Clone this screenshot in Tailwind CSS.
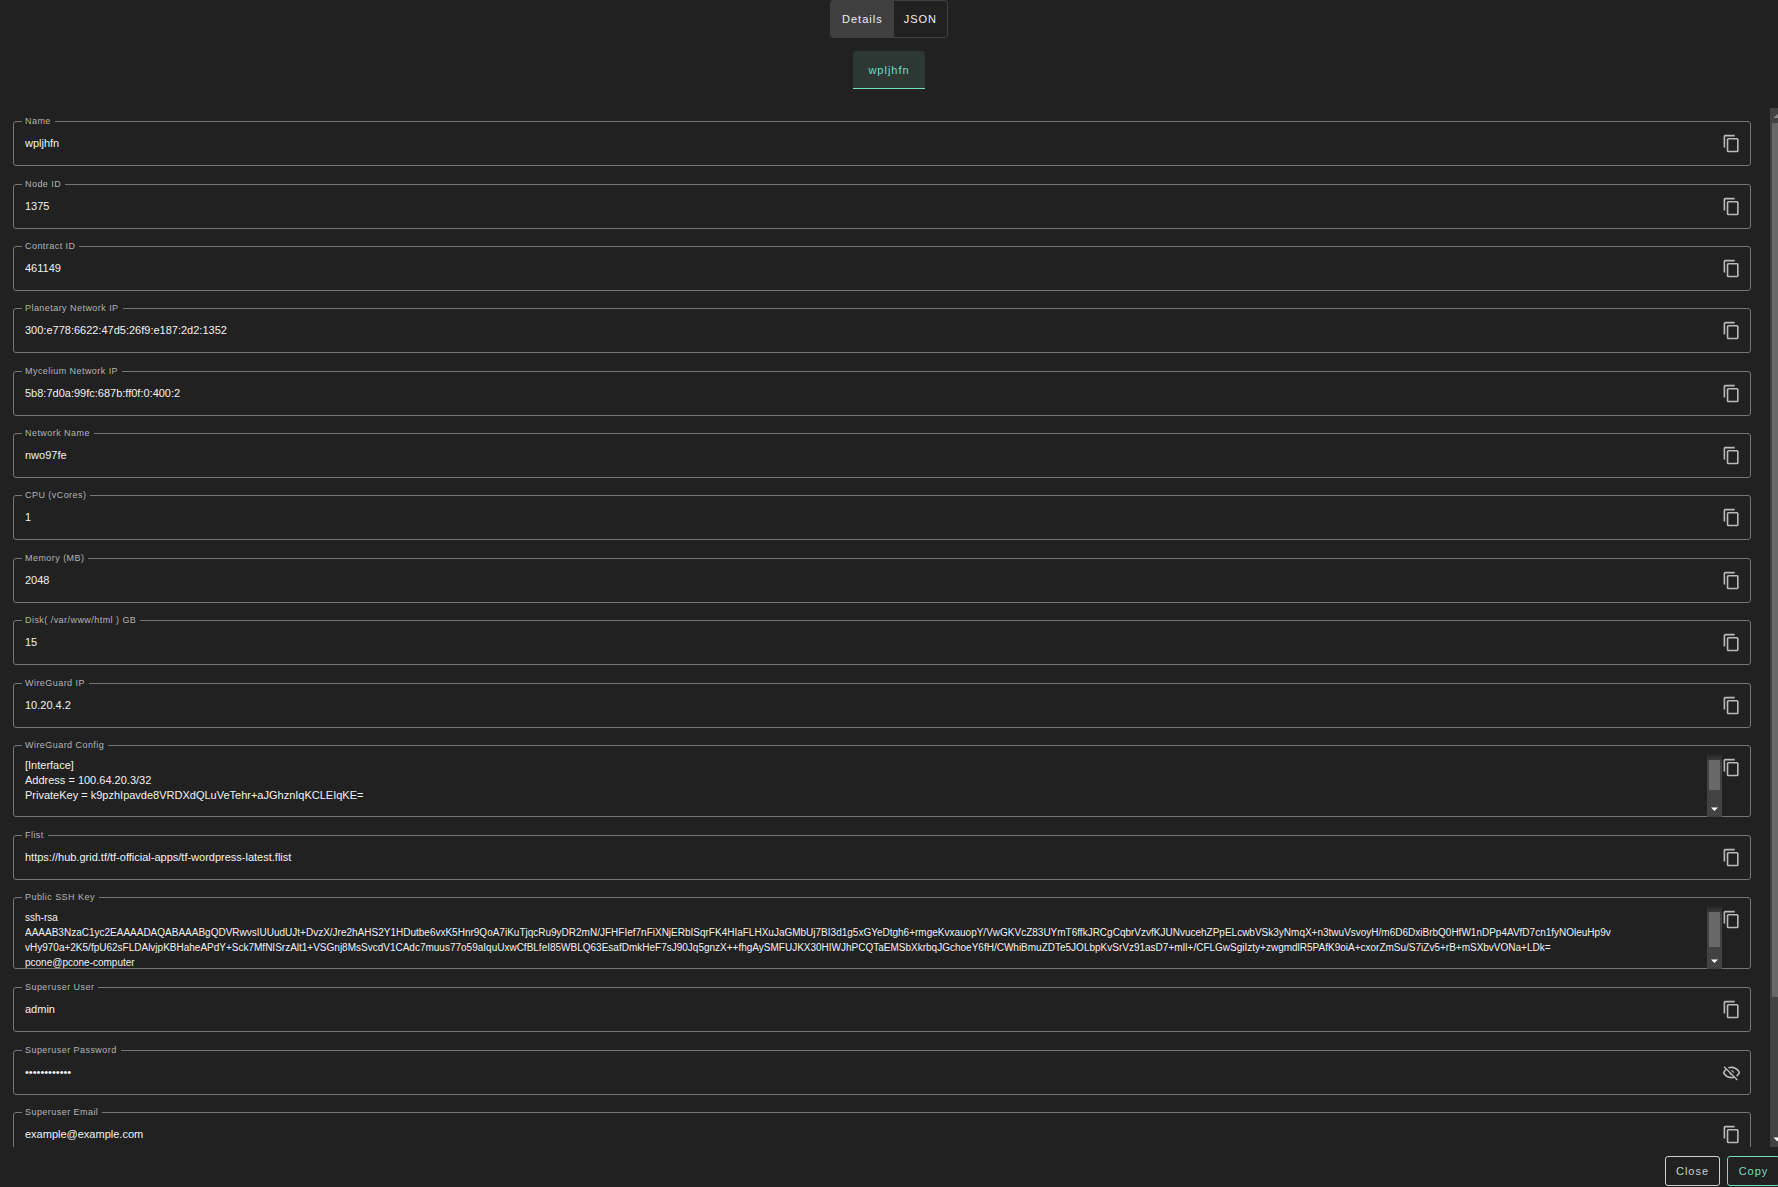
<!DOCTYPE html>
<html lang="en">
<head>
<meta charset="utf-8">
<meta name="viewport" content="width=device-width, initial-scale=1">
<title>Deployment details</title>
<script src="https://cdn.jsdelivr.net/npm/@tailwindcss/browser@4"></script>
</head>
<body class="bg-[#212121] font-['Liberation_Sans',Arial,sans-serif] text-white">
<svg class="hidden" aria-hidden="true">
  <symbol id="copy" viewBox="0 0 24 24"><path d="M19,21H8V7H19M19,5H8A2,2 0 0,0 6,7V21A2,2 0 0,0 8,23H19A2,2 0 0,0 21,21V7A2,2 0 0,0 19,5M16,1H4A2,2 0 0,0 2,3V17H4V3H16V1Z"/></symbol>
  <symbol id="eye-off" viewBox="0 0 24 24"><path d="M2,5.27L3.28,4L20,20.72L18.73,22L15.65,18.92C14.5,19.3 13.28,19.5 12,19.5C7,19.5 2.73,16.39 1,12C1.69,10.24 2.79,8.69 4.19,7.46L2,5.27M12,9A3,3 0 0,1 15,12C15,12.35 14.94,12.69 14.83,13L11,9.17C11.31,9.06 11.65,9 12,9M12,4.5C17,4.5 21.27,7.61 23,12C22.18,14.08 20.79,15.88 19,17.19L17.58,15.76C18.94,14.82 20.06,13.54 20.82,12C19.17,8.64 15.76,6.5 12,6.5C10.91,6.5 9.84,6.68 8.84,7L7.3,5.47C8.74,4.85 10.33,4.5 12,4.5M3.18,12C4.83,15.36 8.24,17.5 12,17.5C12.69,17.5 13.37,17.43 14,17.29L11.72,15C10.29,14.85 9.15,13.71 9,12.28L5.6,8.87C4.61,9.72 3.78,10.78 3.18,12Z"/></symbol>
</svg>
<div class="flex h-screen flex-col overflow-hidden">
  <header class="flex shrink-0 flex-col items-center gap-[13px] pb-[19px]">
    <div class="flex h-[38px] overflow-hidden rounded-[3px] border border-[#3f3f3f] text-[11px] tracking-[1px] text-[#f0f0f0]">
      <button type="button" class="bg-[#3f3f3f] px-[11px]">Details</button>
      <button type="button" class="px-[10px]">JSON</button>
    </div>
    <button type="button" class="h-[38px] rounded-t-[3px] border-b border-[#74ddc3] bg-[#2d3835] px-[15px] pt-[2px] text-[11px] tracking-[1px] text-[#74ddc3]">wpljhfn</button>
  </header>
  <div class="flex min-h-0 flex-1">
    <main id="fields" class="flex min-w-0 flex-1 flex-col gap-[19px] overflow-hidden pt-[13px] pr-[19px] pl-[13px]"></main>
    <div class="flex w-2 shrink-0 flex-col overflow-hidden bg-[#424242]" aria-hidden="true">
      <svg class="h-[15px] w-[15px] shrink-0 fill-[#8b8b8b]" viewBox="0 0 15 15"><path d="M3.5 10L7.5 6L11.5 10Z"/></svg>
      <div class="ml-[2px] h-[874px] w-[11px] shrink bg-[#686868]"></div>
      <svg class="mt-auto h-[15px] w-[15px] shrink-0 fill-white" viewBox="0 0 15 15"><path d="M3.5 5.5L7.5 9.5L11.5 5.5Z"/></svg>
    </div>
  </div>
  <footer class="flex h-10 shrink-0 items-start justify-end gap-[7px] pt-[9px] text-[11px] tracking-[1px]">
    <button type="button" class="h-[30px] w-[55px] rounded-[3px] border border-[#cfcfcf] pt-px text-[#cfcfcf]">Close</button>
    <button type="button" class="-mr-[2px] h-[30px] w-[53px] rounded-[3px] border border-[#74ddc3] pt-px text-[#74ddc3]">Copy</button>
  </footer>
</div>
<script>
const wgConfig = `[Interface]
Address = 100.64.20.3/32
PrivateKey = k9pzhIpavde8VRDXdQLuVeTehr+aJGhznIqKCLEIqKE=`;
const sshKey = `ssh-rsa
AAAAB3NzaC1yc2EAAAADAQABAAABgQDVRwvsIUUudUJt+DvzX/Jre2hAHS2Y1HDutbe6vxK5Hnr9QoA7iKuTjqcRu9yDR2mN/JFHFIef7nFiXNjERbISqrFK4HIaFLHXuJaGMbUj7BI3d1g5xGYeDtgh6+rmgeKvxauopY/VwGKVcZ83UYmT6ffkJRCgCqbrVzvfKJUNvucehZPpELcwbVSk3yNmqX+n3twuVsvoyH/m6D6DxiBrbQ0HfW1nDPp4AVfD7cn1fyNOleuHp9v
vHy970a+2K5/fpU62sFLDAlvjpKBHaheAPdY+Sck7MfNISrzAlt1+VSGnj8MsSvcdV1CAdc7muus77o59aIquUxwCfBLfeI85WBLQ63EsafDmkHeF7sJ90Jq5gnzX++fhgAySMFUJKX30HIWJhPCQTaEMSbXkrbqJGchoeY6fH/CWhiBmuZDTe5JOLbpKvSrVz91asD7+mIl+/CFLGwSgiIzty+zwgmdlR5PAfK9oiA+cxorZmSu/S7iZv5+rB+mSXbvVONa+LDk=
pcone@pcone-computer`;
const groups = [
  [["Name", "wpljhfn"]],
  [["Node ID", "1375"], ["Contract ID", "461149"], ["Planetary Network IP", "300:e778:6622:47d5:26f9:e187:2d2:1352"]],
  [["Mycelium Network IP", "5b8:7d0a:99fc:687b:ff0f:0:400:2"], ["Network Name", "nwo97fe"], ["CPU (vCores)", "1"]],
  [["Memory (MB)", "2048"], ["Disk( /var/www/html ) GB", "15"]],
  [["WireGuard IP", "10.20.4.2"], ["WireGuard Config", wgConfig, "area", 30, "text-[11px]"], ["Flist", "https://hub.grid.tf/tf-official-apps/tf-wordpress-latest.flist"], ["Public SSH Key", sshKey, "area", 35, "text-[10px]"], ["Superuser User", "admin"]],
  [["Superuser Password", "secretsecret", "password"], ["Superuser Email", "example@example.com"]]
];
let n = 0;
const label = (id, text) => `<label for="${id}" class="absolute -top-[6px] left-2 bg-[#212121] pr-1 pl-[3px] text-[9px] leading-[11px] tracking-wider text-[#b4b4b4]">${text}</label>`;
const action = (icon, name) => `<button type="button" aria-label="${name}" class="mt-3 shrink-0 self-start"><svg class="size-[19px] fill-[#bababa]"><use href="#${icon}"/></svg></button>`;
const field = ([name, value, kind = "text", thumb, size]) => {
  const id = "field-" + n++;
  if (kind === "area") return `<div class="relative flex h-[72px] shrink-0 rounded-[3px] border border-[#757575] pr-[9px] pl-[11px]">${label(id, name)}
    <textarea id="${id}" readonly class="mt-3 -mb-px min-w-0 flex-1 resize-none overflow-hidden whitespace-pre ${size} leading-[15px] text-[#f2f2f2] outline-none">${value}</textarea>
    <div aria-hidden="true" class="mt-[7px] -mb-px flex w-[15px] shrink-0 flex-col items-center bg-linear-to-b from-[#212121] to-[#424242] to-15% pt-[7px]"><div class="w-[11px] bg-[#686868]" style="height:${thumb}px"></div><svg class="mt-auto size-[15px] fill-white" viewBox="0 0 15 15"><path d="M4 5.5L7.5 9L11 5.5Z"/></svg></div>
    ${action("copy", "Copy " + name)}</div>`;
  return `<div class="relative -mb-px flex h-[45px] shrink-0 rounded-[3px] border border-[#757575] pr-[9px] pl-[11px]">${label(id, name)}
    <input id="${id}" type="${kind}" readonly value="${value}" class="min-w-0 flex-1 text-[11px] text-[#f2f2f2] outline-none">
    ${kind === "password" ? action("eye-off", "Show password") : action("copy", "Copy " + name)}</div>`;
};
document.getElementById("fields").innerHTML = groups.map(g => `<section class="flex shrink-0 flex-col gap-[18px]">${g.map(field).join("")}</section>`).join("");
</script>
</body>
</html>
